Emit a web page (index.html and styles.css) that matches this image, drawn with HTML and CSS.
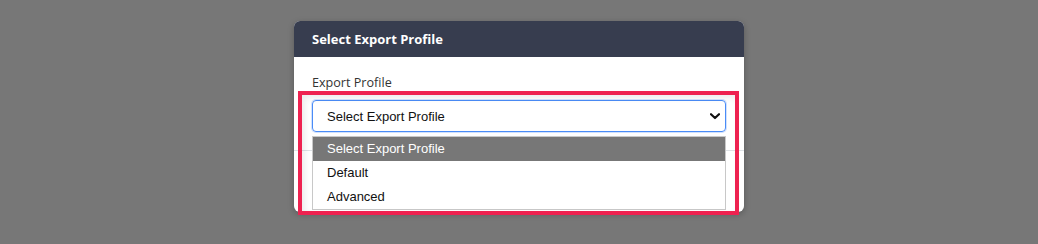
FILE: index.html
```html
<!DOCTYPE html>
<html>
<head>
<meta charset="utf-8">
<link rel="stylesheet" href="styles.css">
</head>
<body>
<div class="modal">
  <div class="modal-header">Select Export Profile</div>
  <div class="modal-body">
    <label class="field-label">Export Profile</label>
    <div class="select">
      <span>Select Export Profile</span>
      <svg class="chev" width="10" height="7" viewBox="0 0 10 7"><path d="M1 1.2 L5 5 L9 1.2" fill="none" stroke="#111" stroke-width="2.2" stroke-linecap="round" stroke-linejoin="round"/></svg>
    </div>
  </div>
  <div class="modal-footer"></div>
  <ul class="options">
    <li class="opt active">Select Export Profile</li>
    <li class="opt">Default</li>
    <li class="opt">Advanced</li>
  </ul>
  <div class="highlight"></div>
</div>
</body>
</html>
```
FILE: styles.css
```css
html, body {
  margin: 0;
  padding: 0;
}
body {
  background: #777777;
  height: 244px;
  overflow: hidden;
  font-family: "Open Sans", "Liberation Sans", sans-serif;
}
.modal {
  position: relative;
  width: 450px;
  margin: 21px 0 0 294px;
  background: #ffffff;
  border-radius: 6px;
  box-shadow: 0 2px 6px rgba(0, 0, 0, 0.25);
}
.modal-header {
  height: 36px;
  display: flex;
  align-items: center;
  padding: 0 18px;
  background: #373d4f;
  color: #ffffff;
  font-weight: 700;
  font-size: 13px;
  border-radius: 6px 6px 0 0;
}
.modal-body {
  padding: 16px 18px 18px;
  display: flex;
  flex-direction: column;
}
.field-label {
  font-size: 12.6px;
  line-height: 20px;
  color: #333333;
  margin-bottom: 7px;
}
.select {
  height: 32px;
  box-sizing: border-box;
  border: 1px solid #4a8cf7;
  border-radius: 4px;
  display: flex;
  align-items: center;
  justify-content: space-between;
  padding: 0 5px 0 14px;
  font-family: "Liberation Sans", Arial, sans-serif;
  font-size: 13px;
  color: #111111;
  box-shadow: 0 0 0 1px rgba(74, 140, 247, 0.25);
}
.chev {
  display: block;
}
.modal-footer {
  height: 61px;
  border-top: 1px solid #dee2e6;
}
.options {
  position: absolute;
  left: 18px;
  top: 115px;
  width: 414px;
  box-sizing: border-box;
  margin: 0;
  padding: 0;
  list-style: none;
  background: #ffffff;
  border: 1px solid #c8c8c8;
  font-family: "Liberation Sans", Arial, sans-serif;
  font-size: 13px;
  color: #111111;
}
.opt {
  height: 24px;
  line-height: 24px;
  padding-left: 14px;
}
.opt.active {
  background: #777777;
  color: #ffffff;
}
.highlight {
  position: absolute;
  left: 4px;
  top: 70px;
  width: 441px;
  height: 124px;
  box-sizing: border-box;
  border: 4px solid #ee2250;
  box-shadow: inset 3px 3px 6px rgba(0, 0, 0, 0.08);
  pointer-events: none;
}
```
